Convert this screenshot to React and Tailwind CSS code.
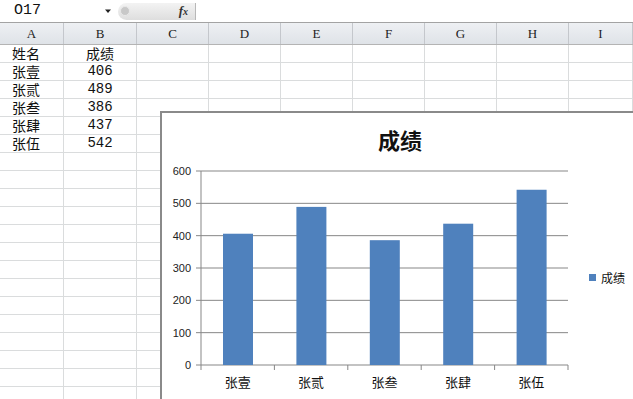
import React from "react";

const cols = [
  { name: "A", w: "w-[64px]" },
  { name: "B", w: "w-[73px]" },
  { name: "C", w: "w-[72px]" },
  { name: "D", w: "w-[72px]" },
  { name: "E", w: "w-[72px]" },
  { name: "F", w: "w-[72px]" },
  { name: "G", w: "w-[72px]" },
  { name: "H", w: "w-[72px]" },
  { name: "I", w: "flex-1" },
];

const data = [
  ["姓名", "成绩"],
  ["张壹", "406"],
  ["张贰", "489"],
  ["张叁", "386"],
  ["张肆", "437"],
  ["张伍", "542"],
];

const scores = [
  { name: "张壹", value: 406 },
  { name: "张贰", value: 489 },
  { name: "张叁", value: 386 },
  { name: "张肆", value: 437 },
  { name: "张伍", value: 542 },
];

const cellFont = { fontFamily: '"Noto Sans CJK SC", sans-serif' };
const numFont = { fontFamily: '"Liberation Mono", monospace' };

const FormulaBar = () => (
  <div className="h-[23px] flex items-center border-b border-[#a3a3a3] bg-white">
    <span className="pl-[14px] w-[100px] text-[15px] text-[#111]" style={numFont}>
      O17
    </span>
    {/* dropdown arrow */}
    <svg width="8" height="6" className="ml-[4px]" viewBox="0 0 8 6">
      <path d="M1 1.5h6L4 5z" fill="#222" />
    </svg>
    <div className="ml-[6px] h-[17px] w-[78px] flex items-center justify-end pr-[7px] rounded-l-[9px] bg-gradient-to-b from-[#f3f3f3] to-[#dedede] border-r border-[#b8b8b8] relative">
      <span className="absolute left-[2px] top-[3px] w-[10px] h-[10px] rounded-full bg-[#c8c8c8] border border-[#e9e9e9]" />
      <span
        className="italic font-bold text-[13px] text-[#333]"
        style={{ fontFamily: '"Liberation Serif", serif' }}
      >
        f<span className="text-[10px]">x</span>
      </span>
    </div>
  </div>
);

const HeaderRow = () => (
  <div className="flex h-[22px] border-b border-[#b4b4b4] bg-gradient-to-b from-[#eef0f3] to-[#dfe3e8]">
    {cols.map((c) => (
      <div
        key={c.name}
        className={`${c.w} shrink-0 border-r border-[#c4c7cc] flex items-center justify-center text-[13px] text-[#222]`}
        style={{ fontFamily: '"Liberation Serif", serif' }}
      >
        {c.name}
      </div>
    ))}
  </div>
);

const Chart = () => {
  const x0 = 39;
  const xEnd = 406;
  const yTop = 19;
  const yZero = 213;
  const step = (xEnd - x0) / scores.length;
  const unit = (yZero - yTop) / 600;
  const ticks = [0, 100, 200, 300, 400, 500, 600];

  return (
    <div className="absolute left-[160px] top-[66px] right-0 bottom-0 bg-white border-l-2 border-t-2 border-[#8a8a8a] flex flex-col">
      <div
        className="pt-[13px] pl-[216px] text-[22px] leading-[26px] font-bold text-[#111]"
        style={cellFont}
      >
        成绩
      </div>
      <svg width="472" height="247" className="block">
        {ticks.map((t) => {
          const y = yZero - t * unit;
          return (
            <g key={t}>
              <line x1="34" x2={xEnd} y1={y} y2={y} stroke="#878787" strokeWidth="1" />
              <text
                x="29"
                y={y + 4}
                textAnchor="end"
                fontSize="11"
                fill="#222"
                fontFamily='"Liberation Sans", Arial, sans-serif'
              >
                {t}
              </text>
            </g>
          );
        })}
        <line x1={x0} x2={x0} y1={yTop} y2={yZero} stroke="#878787" strokeWidth="1" />
        {scores.map((s, i) => (
          <line
            key={"t" + i}
            x1={x0 + i * step}
            x2={x0 + i * step}
            y1={yZero}
            y2={yZero + 5}
            stroke="#878787"
          />
        ))}
        <line x1={xEnd} x2={xEnd} y1={yZero} y2={yZero + 5} stroke="#878787" />
        {scores.map((s, i) => {
          const h = s.value * unit;
          return (
            <rect
              key={s.name}
              x={x0 + i * step + 22}
              y={yZero - h}
              width="30"
              height={h}
              fill="#4f81bd"
            />
          );
        })}
        {scores.map((s, i) => (
          <text
            key={"l" + i}
            x={x0 + i * step + step / 2}
            y="235"
            textAnchor="middle"
            fontSize="13"
            fill="#111"
            fontFamily='"Noto Sans CJK SC", sans-serif'
          >
            {s.name}
          </text>
        ))}
        <rect x="427" y="122" width="7" height="7" fill="#4f81bd" />
        <text
          x="439"
          y="131"
          fontSize="12"
          fill="#111"
          fontFamily='"Noto Sans CJK SC", sans-serif'
        >
          成绩
        </text>
      </svg>
    </div>
  );
};

export default function App() {
  const rows = Array.from({ length: 20 }, (_, i) => data[i] || ["", ""]);

  return (
    <div className="w-[633px] h-[399px] overflow-hidden bg-white flex flex-col">
      <FormulaBar />
      <HeaderRow />
      <div className="relative flex-1 overflow-hidden">
        {rows.map((r, i) => (
          <div key={i} className="flex h-[18px]">
            {cols.map((c, j) => (
              <div
                key={c.name}
                className={`${c.w} shrink-0 border-r border-b border-[#dadcdd] flex items-center text-[14px] leading-[17px] text-[#111] ${
                  j === 0 ? "pl-[12px]" : "justify-center"
                }`}
                style={j === 1 && i > 0 ? numFont : cellFont}
              >
                {j < 2 ? r[j] : ""}
              </div>
            ))}
          </div>
        ))}
        <Chart />
      </div>
    </div>
  );
}
